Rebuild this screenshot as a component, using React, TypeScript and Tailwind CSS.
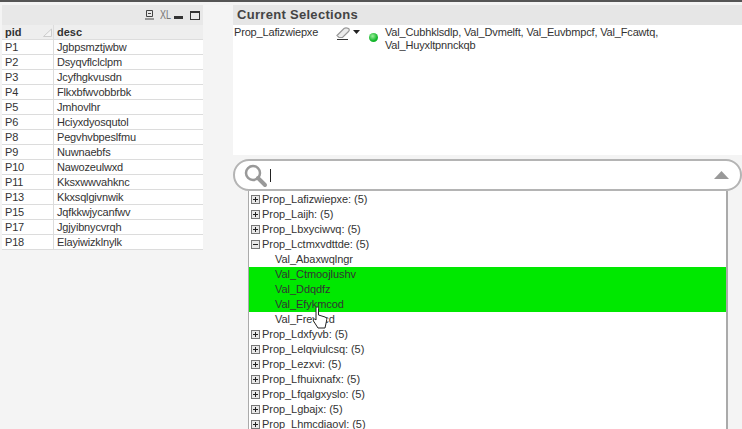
import React from "react";

const rows: [string, string][] = [
  ["P1", "Jgbpsmztjwbw"], ["P2", "Dsyqvflclclpm"], ["P3", "Jcyfhgkvusdn"], ["P4", "Flkxbfwvobbrbk"],
  ["P5", "Jmhovlhr"], ["P6", "Hciyxdyosqutol"], ["P8", "Pegvhvbpeslfmu"], ["P9", "Nuwnaebfs"],
  ["P10", "Nawozeulwxd"], ["P11", "Kksxwwvahknc"], ["P13", "Kkxsqlgivnwik"], ["P15", "Jqfkkwjycanfwv"],
  ["P17", "Jgjyibnycvrqh"], ["P18", "Elayiwizklnylk"],
];

type Item = { t: string; kind: "plus" | "minus" | "val" | "sel" };
const items: Item[] = [
  { t: "Prop_Lafizwiepxe: (5)", kind: "plus" },
  { t: "Prop_Laijh: (5)", kind: "plus" },
  { t: "Prop_Lbxyciwvq: (5)", kind: "plus" },
  { t: "Prop_Lctmxvdttde: (5)", kind: "minus" },
  { t: "Val_Abaxwqlngr", kind: "val" },
  { t: "Val_Ctmoojlushv", kind: "sel" },
  { t: "Val_Ddqdfz", kind: "sel" },
  { t: "Val_Efykmcod", kind: "sel" },
  { t: "Val_Frevkcd", kind: "val" },
  { t: "Prop_Ldxfyvb: (5)", kind: "plus" },
  { t: "Prop_Lelqviulcsq: (5)", kind: "plus" },
  { t: "Prop_Lezxvi: (5)", kind: "plus" },
  { t: "Prop_Lfhuixnafx: (5)", kind: "plus" },
  { t: "Prop_Lfqalgxyslo: (5)", kind: "plus" },
  { t: "Prop_Lgbajx: (5)", kind: "plus" },
  { t: "Prop_Lhmcdiaovl: (5)", kind: "plus" },
];

function Box({ minus }: { minus?: boolean }) {
  return (
    <svg width="9" height="9" viewBox="0 0 9 9" className="shrink-0">
      <rect x="0.5" y="0.5" width="8" height="8" fill="#e8e8e8" stroke="#777" />
      <path d="M2 4.5H7" stroke="#222" />
      {!minus && <path d="M4.5 2V7" stroke="#222" />}
    </svg>
  );
}

export default function App() {
  return (
    <div className="relative w-[742px] h-[429px] overflow-hidden bg-[#f4f4f4] border-t-2 border-[#555] flex font-['Liberation_Sans',sans-serif] text-[11px] text-[#333]">
      <div className="w-[201px] ml-[2px] mr-[30px] mt-[3px] shrink-0 tracking-[-0.17px]">
        <div className="h-[20px] bg-[#e8e8e8] flex items-center justify-end pr-[3px] text-[#555]">
          <svg width="9" height="10" viewBox="0 0 9 10" fill="none" stroke="#444">
            <path d="M1.5 0.5H7.5V6.5H1.5ZM3 3.5H6M0 9H9" />
          </svg>
          <span className="ml-[6px] w-[10px] text-[12px] leading-none text-[#777] scale-x-75 origin-left tracking-normal">XL</span>
          <span className="ml-[4px] w-[9px] h-[3px] mt-[5px] bg-[#333]" />
          <span className="ml-[7px] w-[10px] h-[9px] border border-[#333] border-t-2" />
        </div>
        <div className="h-[15px] bg-[#eeeeee] flex font-bold text-[#333] border-b border-[#ddd] leading-[14px] tracking-normal">
          <div className="w-[52px] pl-[3px] border-r border-[#ddd] relative">pid
            <svg width="9" height="9" viewBox="0 0 9 9" className="absolute right-[1px] top-[3px]"><path d="M0.5 8.5H8.5L8.5 1Z" fill="#f4f4f4" stroke="#ccc" /></svg>
          </div>
          <div className="pl-[3px]">desc</div>
        </div>
        <div className="bg-white">
          {rows.map(([p, d]) => (
            <div key={p} className="h-[15px] flex border-b border-[#dcdcdc] leading-[14px]">
              <div className="w-[52px] pl-[3px] border-r border-[#dcdcdc]">{p}</div>
              <div className="pl-[3px]">{d}</div>
            </div>
          ))}
        </div>
      </div>
      <div className="flex-1 mt-[3px] min-w-0">
        <div className="h-[20px] bg-[#e6e6e6] pl-[4px] flex items-center font-bold text-[13px] text-[#444] tracking-[0.3px]">Current Selections</div>
        <div className="h-[130px] bg-white flex items-start pt-[1px] text-[#333] leading-[13px] tracking-[-0.17px]">
          <div className="w-[103px] pl-[1px]">Prop_Lafizwiepxe</div>
          <div className="w-[33px] flex items-start gap-[3px] pt-[1px]">
            <svg width="14" height="13" viewBox="0 0 14 13">
              <path d="M1 8.5L8 1.5C9 0.7 11 0.7 12.5 1.5C13.5 2.3 13.5 3.5 12.5 4.5L6.5 10.5H3Z" fill="#ececec" stroke="#999" strokeWidth="1.2" />
              <path d="M1 12.5H12" stroke="#333" />
            </svg>
            <svg width="7" height="4" viewBox="0 0 7 4" className="mt-[3px]"><path d="M0 0H7L3.5 4Z" fill="#222" /></svg>
          </div>
          <span className="w-[9px] h-[9px] mt-[7px] rounded-full bg-[radial-gradient(circle_at_40%_35%,#9af09a,#12b52a_60%)] shrink-0" />
          <div className="ml-[7px] w-[290px]">Val_Cubhklsdlp, Val_Dvmelft, Val_Euvbmpcf, Val_Fcawtq, Val_Huyxltpnnckqb</div>
        </div>
        <div className="mt-[4px] h-[32px] w-[509px] bg-white border-2 border-[#b4b4b4] rounded-[16px] flex items-center pl-[8px] pr-[11px]">
          <svg width="25" height="25" viewBox="0 0 25 25" fill="none" stroke="#999" strokeWidth="2.5">
            <circle cx="10" cy="10" r="7" />
            <path d="M15 15L22 22" strokeWidth="4" strokeLinecap="round" />
          </svg>
          <span className="w-px h-[13px] bg-[#222] ml-[2px]" />
          <svg width="15" height="8" viewBox="0 0 15 8" className="ml-auto"><path d="M0 8L7.5 0L15 8Z" fill="#999" /></svg>
        </div>
        <div className="ml-[15px] w-[480px] bg-white border-l border-r-2 border-[#aaa] pt-[1px] tracking-[-0.05px]">
          {items.map((it) => (
            <div key={it.t} className={`h-[15px] flex items-center text-[#333] ${it.kind === "sel" ? "bg-[#00e800]" : ""}`}>
              {it.kind === "plus" && <span className="ml-[2px] mr-[2px] flex"><Box /></span>}
              {it.kind === "minus" && <span className="ml-[2px] mr-[2px] flex"><Box minus /></span>}
              {(it.kind === "val" || it.kind === "sel") && <span className="w-[26px]" />}
              <span>{it.t}</span>
            </div>
          ))}
        </div>
      </div>
      <svg width="20" height="24" viewBox="0 0 20 24" className="absolute left-[311px] top-[304px]">
        <path d="M5 1.5C6 0.5 7.5 1 7.5 2.5V9L14 11C15.5 11.5 16 13 15.5 15L14 22H7L2.5 15C1.5 13.5 3 12 5 14Z" fill="#fff" stroke="#222" />
      </svg>
    </div>
  );
}
